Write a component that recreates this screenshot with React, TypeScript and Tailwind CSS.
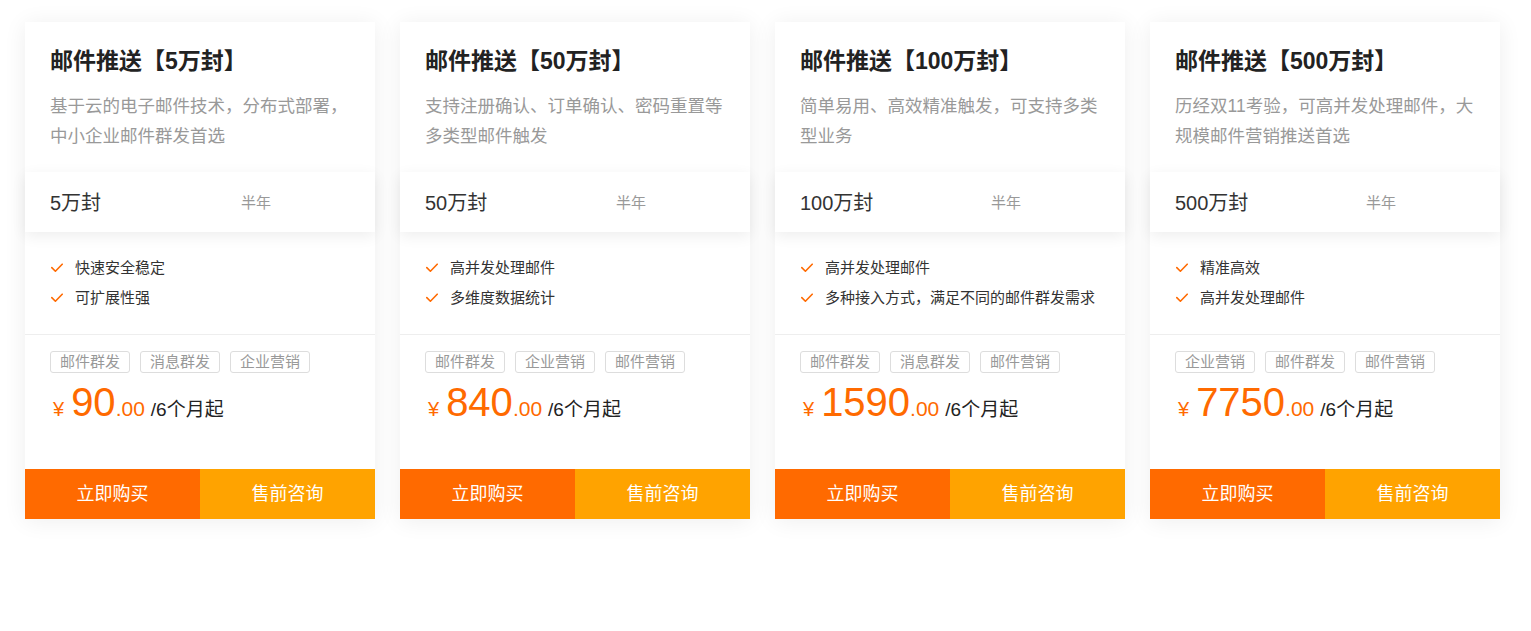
import React from "react";

type Card = {
  title: string;
  desc: string;
  amount: string;
  features: string[];
  tags: string[];
  price: string;
};

const cards: Card[] = [
  {
    title: "邮件推送【5万封】",
    desc: "基于云的电子邮件技术，分布式部署，中小企业邮件群发首选",
    amount: "5万封",
    features: ["快速安全稳定", "可扩展性强"],
    tags: ["邮件群发", "消息群发", "企业营销"],
    price: "90",
  },
  {
    title: "邮件推送【50万封】",
    desc: "支持注册确认、订单确认、密码重置等多类型邮件触发",
    amount: "50万封",
    features: ["高并发处理邮件", "多维度数据统计"],
    tags: ["邮件群发", "企业营销", "邮件营销"],
    price: "840",
  },
  {
    title: "邮件推送【100万封】",
    desc: "简单易用、高效精准触发，可支持多类型业务",
    amount: "100万封",
    features: ["高并发处理邮件", "多种接入方式，满足不同的邮件群发需求"],
    tags: ["邮件群发", "消息群发", "邮件营销"],
    price: "1590",
  },
  {
    title: "邮件推送【500万封】",
    desc: "历经双11考验，可高并发处理邮件，大规模邮件营销推送首选",
    amount: "500万封",
    features: ["精准高效", "高并发处理邮件"],
    tags: ["企业营销", "邮件群发", "邮件营销"],
    price: "7750",
  },
];

function CheckIcon() {
  return (
    <svg width="12" height="10" viewBox="0 0 12 10" className="shrink-0">
      <polyline
        points="0.8,4.6 4.4,8.2 11.2,1.2"
        fill="none"
        stroke="#ff6a00"
        strokeWidth="1.6"
        strokeLinecap="round"
        strokeLinejoin="round"
      />
    </svg>
  );
}

export default function App() {
  return (
    <div className="min-h-screen bg-white pt-[22px] pl-[25px] flex gap-[25px] font-['Liberation_Sans','Noto_Sans_CJK_SC',sans-serif]">
      {cards.map((c) => (
        <div
          key={c.title}
          className="w-[350px] h-[497px] bg-white shadow-[0_2px_22px_rgba(0,0,0,0.07)] flex flex-col"
        >
          <div className="px-[25px] pt-[25px] pb-[21px]">
            <h3 className="text-[23px] leading-[28px] font-bold text-[#222] whitespace-nowrap">{c.title}</h3>
            <p className="mt-[16px] text-[17.5px] leading-[30px] text-[#999] h-[60px]">{c.desc}</p>
          </div>
          <div className="relative z-10 h-[60px] flex items-center pt-[2px] px-[25px] bg-white shadow-[0_4px_14px_rgba(0,0,0,0.07)]">
            <span className="w-[191px] text-[20px] text-[#333]">{c.amount}</span>
            <span className="text-[15px] text-[#999]">半年</span>
          </div>
          <div className="px-[26px] pt-[21px] pb-[21px] border-b border-[#eee]">
            {c.features.map((f) => (
              <div key={f} className="flex items-center h-[30px] gap-[12px]">
                <CheckIcon />
                <span className="text-[15px] text-[#333]">{f}</span>
              </div>
            ))}
          </div>
          <div className="px-[25px] pt-[16px]">
            <div className="flex gap-[10px]">
              {c.tags.map((t) => (
                <span
                  key={t}
                  className="h-[22px] px-[9px] border border-[#ddd] rounded-[3px] text-[15px] leading-[20px] text-[#999]"
                >
                  {t}
                </span>
              ))}
            </div>
            <div className="mt-[9px] flex items-baseline leading-none">
              <span className="text-[20px] text-[#ff6a00] ml-[3px] mr-[7px]">¥</span>
              <span className="text-[40px] text-[#ff6a00]">{c.price}</span>
              <span className="text-[21px] text-[#ff6a00]">.00</span>
              <span className="text-[19px] text-[#222] ml-[6px]">/6个月起</span>
            </div>
          </div>
          <div className="mt-auto flex h-[50px]">
            <button className="flex-1 bg-[#ff6a00] text-white text-[18px] pt-[1px]">立即购买</button>
            <button className="flex-1 bg-[#ffa300] text-white text-[18px] pt-[1px]">售前咨询</button>
          </div>
        </div>
      ))}
    </div>
  );
}
